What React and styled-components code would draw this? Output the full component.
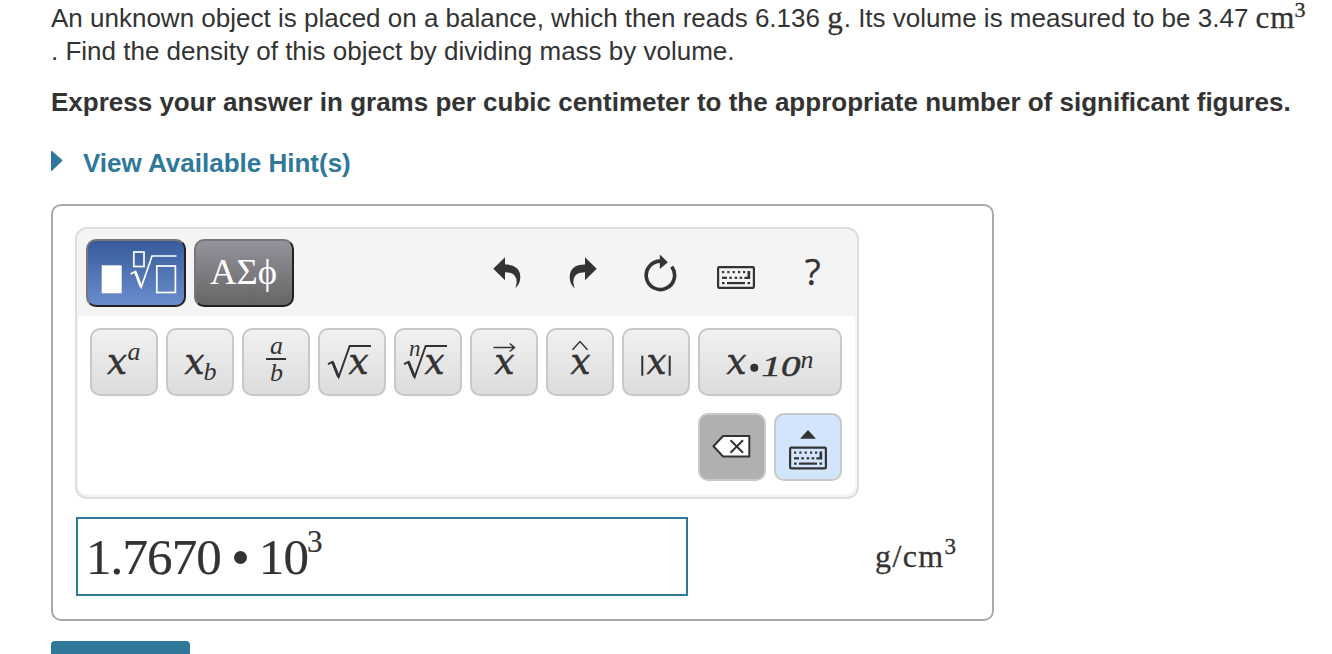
import styled, { createGlobalStyle } from 'styled-components'

const GlobalStyle = createGlobalStyle`
    body {
        margin: 0;
        background-color: white;
        overflow: hidden;
    }
    * {
        box-sizing: border-box;
    }
`;

const Container = styled.div`
    height: 654px;
    padding: 2px 0 0 51px;
    overflow: hidden;
    color: #333;
    font-family: 'Liberation Sans', Arial, sans-serif;
    font-size: 26px;
`;
const Question = styled.div`
    height: 66px;
    line-height: 33px;
`;
const Line = styled.div`
    display: flex;
    height: 33px;
    white-space: pre;
`;
const Instruction = styled.div`
    height: 33px;
    margin-top: 18px;
    line-height: 33px;
    font-weight: bold;
    white-space: nowrap;
`;
const Math = styled.span`
    display: inline-flex;
    font-family: 'Liberation Serif', serif;
    font-size: ${props => props.$size || '31px'};
    letter-spacing: ${props => props.$spacing || '0'};
    margin: ${props => props.$margin || '0'};
    -webkit-text-stroke: 0.3px #333;
`;
const Power = styled.span`
    font-size: ${props => props.$size};
    line-height: ${props => props.$height || 'inherit'};
    margin-top: ${props => props.$shift};
    margin-left: ${props => props.$gap || '0'};
`;
const Hint = styled.div`
    display: flex;
    height: 33px;
    margin-top: 28px;
    line-height: 33px;
    color: #2f7899;
    font-weight: bold;
    white-space: nowrap;

    svg {
        margin: 3px 20px 0 0;
    }
`;
const AnswerBox = styled.div`
    width: 943px;
    height: 417px;
    margin-top: 24px;
    padding: 21px 22px;
    border: 2px solid #a9a9a9;
    border-radius: 10px;
`;
const Palette = styled.div`
    width: 784px;
    height: 272px;
    padding: 0 2px 2px 1px;
    border: 2px solid #ddd;
    border-radius: 12px;
    background-color: #f4f4f4;
`;
const Toolbar = styled.div`
    display: flex;
    height: 87px;
    padding: 10px 0 0 8px;
`;
const Tab = styled.button`
    width: 100px;
    height: 68px;
    margin-right: 8px;
    padding: 0;
    border: 2px solid;
    border-color: #777 #212121 #212121 #777;
    border-radius: 10px;
    background: ${props => props.$active
        ? 'linear-gradient(#36599a, #6c8fcf)'
        : 'linear-gradient(#96949d, #646464)'};
    background-origin: border-box;

    svg {
        display: block;
    }
`;
const Tools = styled.div`
    display: flex;
    height: 68px;
    margin-left: 166.5px;
`;
const Tool = styled.div`
    display: flex;
    width: 76.5px;
    justify-content: center;
    padding-top: ${props => props.$top}px;
`;
const Help = styled.span`
    font-family: 'Open Sans', sans-serif;
    font-size: 37px;
    line-height: 50px;
    -webkit-text-stroke: 0.3px #333;
`;
const Keys = styled.div`
    height: 178px;
    padding: 12px 12px 0;
    background-color: white;
    border-radius: 0 0 8px 8px;
`;
const Row = styled.div`
    display: flex;
    gap: 8px;
    justify-content: ${props => props.$end ? 'flex-end' : 'flex-start'};
    width: 752px;
    height: 68px;
    margin-bottom: 17px;
`;
const Key = styled.button`
    width: ${props => props.$wide ? '144px' : '68px'};
    height: 68px;
    padding: 0;
    border: 2px solid #c8c8c8;
    border-radius: 10px;
    background: ${props => props.$fill || 'linear-gradient(#f1f1f1, #dcdcdc)'};

    svg {
        display: block;
    }
`;
const Glyph = styled.svg`
    fill: none;
    stroke: #333;
    stroke-width: 2;

    text {
        fill: #333;
        stroke: none;
        font-family: 'Liberation Serif', serif;
        font-style: italic;
        font-size: 26px;
    }
    .base {
        font-family: 'DejaVu Serif', serif;
        font-size: 37px;
        stroke: #333;
        stroke-width: 0.5;
    }
    .index {
        font-size: 23px;
    }
    .ten {
        font-size: 30px;
        stroke: #333;
        stroke-width: 0.5;
    }
`;
const AnswerRow = styled.div`
    display: flex;
    align-items: center;
    margin-top: 18px;
    padding-left: 1px;
`;
const Field = styled.div`
    display: flex;
    width: 612px;
    height: 79px;
    padding-left: 8px;
    border: 2px solid #2f7899;
    font-family: 'Liberation Serif', serif;
    font-size: 51px;
    line-height: 77px;
    letter-spacing: -0.9px;
    -webkit-text-stroke: 0.2px #333;
`;
const Dot = styled.span`
    width: 13px;
    height: 13px;
    margin: 32px 12px 0 13px;
    border-radius: 50%;
    background-color: #333;
`;
const Submit = styled.div`
    width: 139px;
    height: 40px;
    margin-top: 20px;
    border-radius: 4px;
    background-color: #2f7899;
`;

const keyboardKeys = [
    [5, 5, 2.2], [10.3, 5, 2.2], [15.6, 5, 2.2], [21, 5, 2.2], [26, 5, 2.2],
    [5, 10.7, 5], [12.3, 10.7, 2.6], [17.6, 10.7, 2.6], [22.6, 10.7, 2.6],
    [5, 16, 2.6], [10, 16, 18], [30.5, 16, 2.6],
];

const Keyboard = () => (
    <g fill="#333" stroke="none">
        <rect x="1.1" y="1.1" width="35.8" height="20.8" rx="1.2" fill="none" stroke="#333" strokeWidth="2.2" />
        {keyboardKeys.map(([x, y, w]) => (
            <rect key={`${x}-${y}`} x={x} y={y} width={w} height="2.2" />
        ))}
        <path d="M30.5 5h2.7v7.9h-5.8v-2.2h3.1z" />
    </g>
)

const Base = ({ x = 22.5, y = 44 }) => (
    <text className="base" x={x} y={y} textLength="20" lengthAdjust="spacingAndGlyphs">x</text>
)

const Radical = () => (
    <>
        <path d="M8 34.2 L12.6 31.8 L18.7 47 L29.7 16 H51" />
        <path d="M12.5 32 L18.5 47" strokeWidth="2.8" />
    </>
)

const App = () => {
  return (
    <Container>
        <GlobalStyle />
        <Question>
            <Line>
                <span>An unknown object is placed on a balance, which then reads 6.136 </span>
                <Math $margin="-1px 1px 0 0">g</Math>
                <span>. Its volume is measured to be 3.47 </span>
                <Math $spacing="1px" $margin="-1px 0 0 0">cm<Power $size="22px" $height="20px" $shift="-1px" $gap="-1px">3</Power></Math>
            </Line>
            <Line>. Find the density of this object by dividing mass by volume.</Line>
        </Question>
        <Instruction>Express your answer in grams per cubic centimeter to the appropriate number of significant figures.</Instruction>
        <Hint>
            <svg width="12" height="22"><path d="M0 1.5 Q0 0 1.3 1.2 L11 9.8 Q11.8 10.5 11 11.2 L1.3 20.5 Q0 21.5 0 20z" fill="#2f7899" /></svg>
            View Available Hint(s)
        </Hint>
        <AnswerBox>
            <Palette>
                <Toolbar>
                    <Tab $active>
                        <svg width="96" height="64" fill="none" stroke="white" strokeWidth="1.7">
                            <rect x="13.7" y="24.3" width="20" height="28" fill="white" stroke="none" />
                            <rect x="45.8" y="11" width="10.2" height="14.5" />
                            <path d="M42.5 33 L47.5 30.5 L53.3 46 L64 15 H88.5" />
                            <path d="M47.3 31 L53 46" strokeWidth="2.6" />
                            <rect x="68.8" y="25" width="18.6" height="26.5" />
                        </svg>
                    </Tab>
                    <Tab>
                        <svg width="96" height="64">
                            <text x="14" y="42.5" fill="white" fontFamily="'Liberation Serif', serif" fontSize="36" textLength="67" lengthAdjust="spacingAndGlyphs">ΑΣϕ</text>
                        </svg>
                    </Tab>
                    <Tools>
                        <Tool $top="18">
                            <svg width="28" height="32"><path d="M.3 11.7 L12 .3 V7.5 C22 7.5 27.3 12 27.3 20 C27.3 25 25 29 22.3 31.3 C23.8 27 24 24 23 21 C21 16.5 18 15.5 12 15.2 V23.3z" fill="#333" /></svg>
                        </Tool>
                        <Tool $top="18">
                            <svg width="28" height="32"><path transform="translate(28 0) scale(-1 1)" d="M.3 11.7 L12 .3 V7.5 C22 7.5 27.3 12 27.3 20 C27.3 25 25 29 22.3 31.3 C23.8 27 24 24 23 21 C21 16.5 18 15.5 12 15.2 V23.3z" fill="#333" /></svg>
                        </Tool>
                        <Tool $top="15">
                            <svg width="34" height="38">
                                <path d="M28.7 12.7 A14.2 14.2 0 1 1 17.5 7.1" fill="none" stroke="#333" strokeWidth="3.6" />
                                <path d="M16.8 .6 L24.8 8.3 L16.8 15z" fill="#333" />
                            </svg>
                        </Tool>
                        <Tool $top="27">
                            <svg width="38" height="23"><Keyboard /></svg>
                        </Tool>
                        <Tool $top="7"><Help>?</Help></Tool>
                    </Tools>
                </Toolbar>
                <Keys>
                    <Row>
                        <Key>
                            <Glyph width="64" height="64">
                                <Base x={15} />
                                <text x="35.5" y="30">a</text>
                            </Glyph>
                        </Key>
                        <Key>
                            <Glyph width="64" height="64">
                                <Base x={16.5} />
                                <text x="35.5" y="50">b</text>
                            </Glyph>
                        </Key>
                        <Key>
                            <Glyph width="64" height="64">
                                <text x="26" y="23.5">a</text>
                                <path d="M22 29 H42" />
                                <text x="26" y="51">b</text>
                            </Glyph>
                        </Key>
                        <Key>
                            <Glyph width="64" height="64">
                                <Radical />
                                <Base x={28.5} />
                            </Glyph>
                        </Key>
                        <Key>
                            <Glyph width="64" height="64">
                                <Radical />
                                <text className="index" x="13" y="25.5">n</text>
                                <Base x={28.5} />
                            </Glyph>
                        </Key>
                        <Key>
                            <Glyph width="64" height="64">
                                <path d="M21.5 17.5 H42.5 M37.7 13.5 L42.5 17.5 L37.7 21.5" strokeWidth="1.5" />
                                <Base />
                            </Glyph>
                        </Key>
                        <Key>
                            <Glyph width="64" height="64">
                                <path d="M24.5 19.8 L32 11.5 L39.5 19.8" strokeWidth="1.5" />
                                <Base />
                            </Glyph>
                        </Key>
                        <Key>
                            <Glyph width="64" height="64">
                                <path d="M18.3 25.7 V45.7 M45.7 25.7 V45.7" />
                                <Base x={22.5} />
                            </Glyph>
                        </Key>
                        <Key $wide>
                            <Glyph width="140" height="64">
                                <Base x={26.5} />
                                <circle cx="54.3" cy="37.7" r="4" fill="#333" stroke="none" />
                                <text className="ten" x="61.5" y="45.7" textLength="39" lengthAdjust="spacingAndGlyphs">10</text>
                                <text x="100.5" y="38">n</text>
                            </Glyph>
                        </Key>
                    </Row>
                    <Row $end>
                        <Key $fill="#b0b0b0">
                            <Glyph width="64" height="64">
                                <path d="M13.5 31.3 L23 21 H49.3 V41.5 H23z" fill="white" />
                                <path d="M30.5 25.3 L43 37.7 M43 25.3 L30.5 37.7" />
                            </Glyph>
                        </Key>
                        <Key $fill="#d3e4fd">
                            <Glyph width="64" height="64">
                                <path d="M24 23.7 L32 15 L40 23.7z" fill="#333" stroke="none" />
                                <g transform="translate(13 31.5)"><Keyboard /></g>
                            </Glyph>
                        </Key>
                    </Row>
                </Keys>
            </Palette>
            <AnswerRow>
                <Field>
                    <span>1.7670</span>
                    <Dot />
                    <span>10</span>
                    <Power $size="31px" $shift="-16px" $gap="-1px">3</Power>
                </Field>
                <Math $size="32px" $spacing="1.4px" $margin="0 0 0 187px">g/cm<Power $size="23px" $shift="-4px">3</Power></Math>
            </AnswerRow>
        </AnswerBox>
        <Submit />
    </Container>
  )
}

export default App
